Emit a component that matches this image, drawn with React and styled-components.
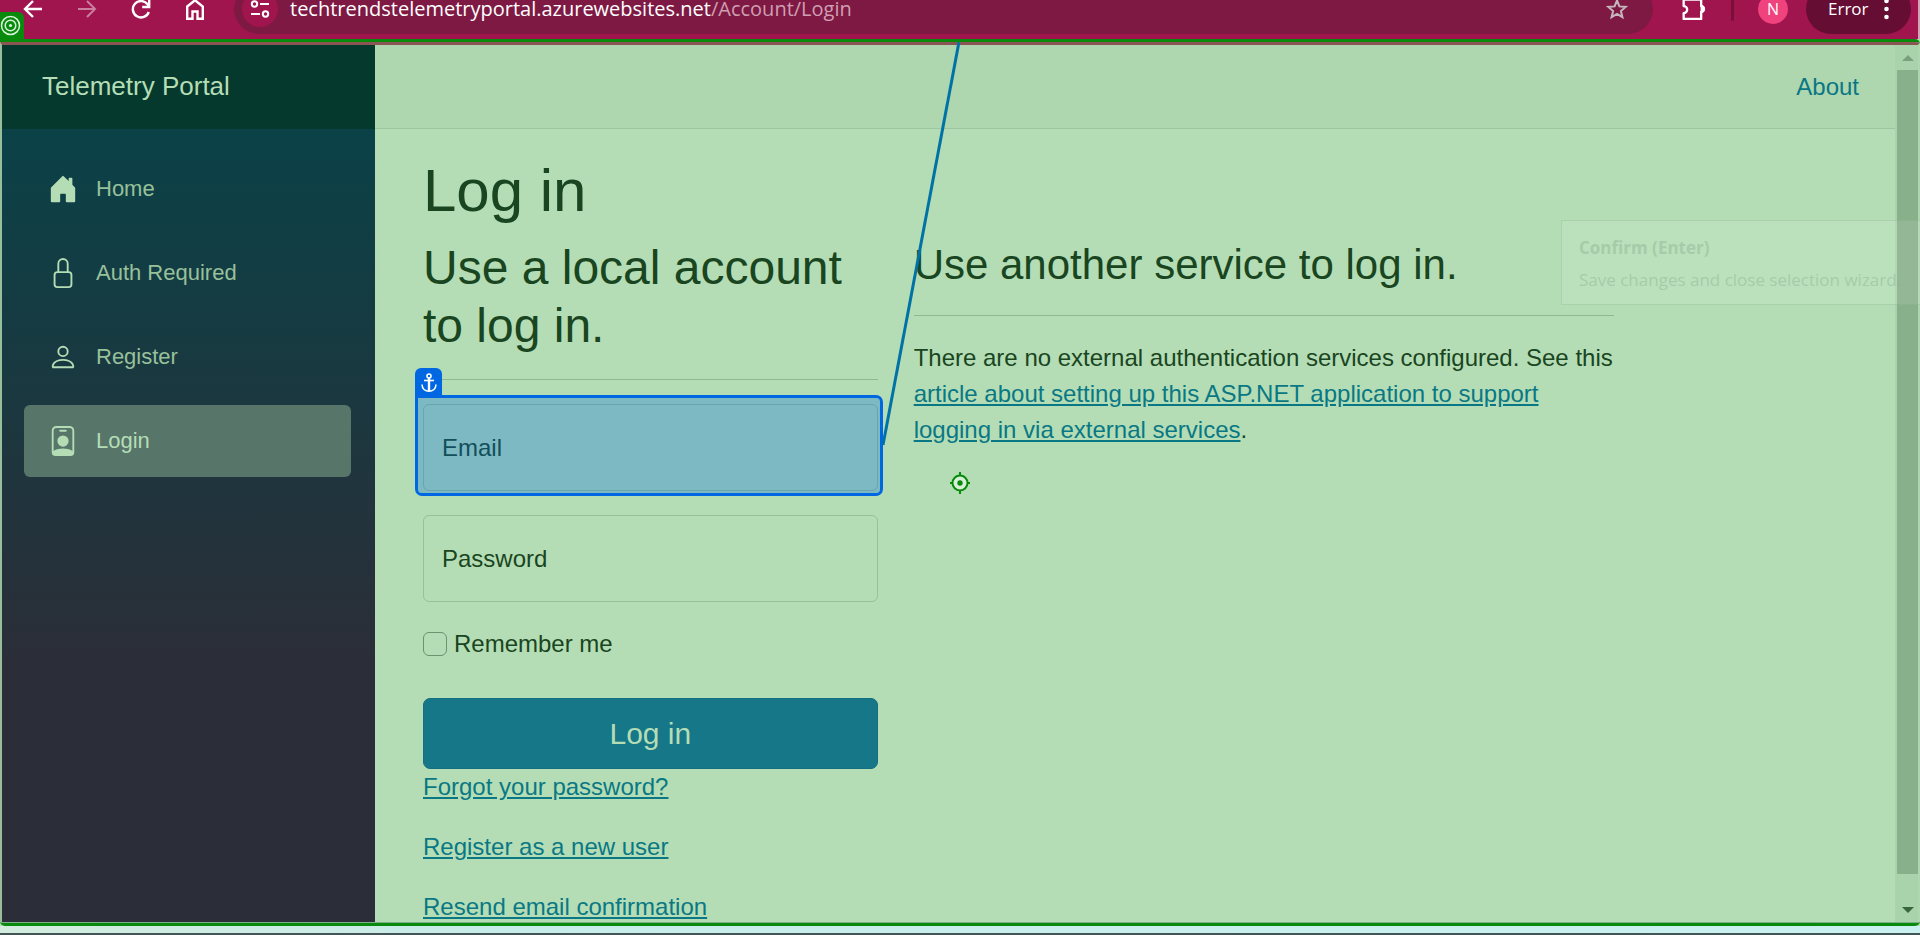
import React from "react";
import styled, { createGlobalStyle } from "styled-components";
import { BsHouseDoorFill, BsLock, BsPerson, BsPersonBadge } from "react-icons/bs";

const color = {
  page: "#b4ddb5",
  header: "#aed7af",
  rule: "#8eb792",
  field: "#97c09b",
  text: "#1a4521",
  link: "#0a7884",
  button: "#157788",
  chrome: "#a1154e",
  omnibox: "#7e1943",
  frame: "#088b0c",
  anchor: "#0067e2",
  connector: "#0072a5",
};

const uiFont = '"Open Sans", "Noto Sans", sans-serif';

const GlobalStyle = createGlobalStyle`
  *, *::before, *::after { box-sizing: border-box; }
  body {
    margin: 0;
    overflow: hidden;
    background: ${color.page};
    color: ${color.text};
    font: 24px/36px "Liberation Sans", Arial, sans-serif;
  }
`;

const Screen = styled.div`
  display: flex;
  flex-direction: column;
  height: 100vh;
`;

/* Browser toolbar */
const Toolbar = styled.div`
  position: relative;
  display: flex;
  align-items: flex-end;
  flex: none;
  height: 39px;
  padding-bottom: 5px;
  overflow: hidden;
  background: ${color.chrome};
  border-right: 2px solid #d3a3b8;
  color: #fff;
  font-family: ${uiFont};
`;
const ToolbarRow = styled.div`
  display: flex;
  align-items: center;
  flex: 1;
  height: 50px;
  padding: 0 7px 0 6px;
`;
const ToolButton = styled.button`
  display: grid;
  place-items: center;
  width: ${(p) => p.$width || 54}px;
  height: 36px;
  padding: 0;
  border: 0;
  background: none;
  color: inherit;
  opacity: ${(p) => (p.$dim ? 0.45 : 1)};
`;
const Omnibox = styled.div`
  display: flex;
  align-items: center;
  gap: 12px;
  flex: 1;
  height: 50px;
  margin: 0 26px 0 12px;
  padding: 0 24px 0 8px;
  border-radius: 25px;
  background: ${color.omnibox};
`;
const SiteInfo = styled.button`
  display: grid;
  place-items: center;
  width: 36px;
  height: 36px;
  padding: 0;
  border: 0;
  border-radius: 50%;
  background: ${color.chrome};
  color: #fff;
`;
const Address = styled.div`
  flex: 1;
  font-size: 20px;
  line-height: 28px;
  white-space: nowrap;
`;
const AddressPath = styled.span`
  color: #cf9fb2;
`;
const Tools = styled.div`
  display: flex;
  align-items: center;
  gap: 24px;
`;
const Divider = styled.span`
  width: 3px;
  height: 24px;
  border-radius: 2px;
  background: #7a0f3a;
`;
const Avatar = styled.span`
  display: grid;
  place-items: center;
  width: 30px;
  height: 30px;
  border-radius: 50%;
  background: #f0427c;
  font-size: 16px;
  line-height: 24px;
`;
const ErrorButton = styled.button`
  display: flex;
  align-items: center;
  justify-content: space-between;
  width: 105px;
  height: 50px;
  margin-left: -6px;
  padding: 0 22px;
  border: 0;
  border-radius: 25px;
  background: #650d33;
  color: #fff;
  font: 17px/24px ${uiFont};
`;
const TargetBadge = styled.div`
  position: absolute;
  left: 0;
  bottom: 0;
  width: 24px;
  height: 27px;
  border-radius: 0 6px 0 0;
  background: ${color.frame};
`;

/* Selected page area */
const Stage = styled.div`
  position: relative;
  display: flex;
  flex: 1;
  min-height: 0;
  border-top: 3px solid ${color.frame};
  border-bottom: 3px solid ${color.frame};
  border-radius: 0 5px 5px 5px;
  overflow: hidden;
`;
const Viewport = styled.div`
  display: flex;
  flex: 1;
  min-width: 0;
  border-top: 3px solid #8a5553;
  border-bottom: 1px solid #7fae8a;
  border-left: 2px solid #98bf9c;
  border-right: 2px solid #aed6b0;
`;
const Sidebar = styled.aside`
  flex: none;
  width: 373px;
  background: linear-gradient(180deg, #05454a 0%, #2b2e38 70%);
`;
const Brand = styled.div`
  display: flex;
  align-items: center;
  height: 84px;
  padding: 0 40px 2px;
  background: #05392d;
  color: ${color.page};
`;
const BrandLink = styled.a`
  color: inherit;
  font-size: 26px;
  text-decoration: none;
`;
const Nav = styled.nav`
  display: flex;
  flex-direction: column;
  gap: 12px;
  padding: 24px 24px 0 22px;
`;
const NavLink = styled.a`
  display: flex;
  align-items: center;
  gap: 18px;
  height: 72px;
  padding: 0 24px;
  border-radius: 6px;
  background: ${(p) => (p.$active ? "#577569" : "transparent")};
  color: ${(p) => (p.$active ? color.page : "#98c09b")};
  font-size: 22px;
  text-decoration: none;
  svg {
    width: 30px;
    height: 30px;
    color: ${color.page};
  }
`;

const Main = styled.main`
  display: flex;
  flex-direction: column;
  flex: 1;
  min-width: 0;
`;
const TopRow = styled.header`
  display: flex;
  align-items: center;
  justify-content: flex-end;
  flex: none;
  height: 84px;
  padding: 0 36px 0 48px;
  border-bottom: 1px solid #9cc5a0;
  background: ${color.header};
`;
const Link = styled.a`
  color: ${color.link};
  text-decoration: ${(p) => (p.$plain ? "none" : "underline")};
`;
const Article = styled.article`
  flex: 1;
  min-height: 0;
  padding: 26px 18px 0 30px;
  overflow: hidden;
`;
const Title = styled.h1`
  margin: 0 18px 12px;
  font-size: 60px;
  font-weight: 400;
  line-height: 72px;
`;
const Columns = styled.div`
  display: grid;
  grid-template-columns: 4fr 6fr 2fr;
`;
const Column = styled.section`
  padding: 0 18px;
`;
const LocalHeading = styled.h2`
  margin: 0;
  font-size: 48px;
  font-weight: 400;
  line-height: 58px;
`;
const ServiceHeading = styled.h3`
  margin: 0;
  font-size: 42px;
  font-weight: 400;
  line-height: 52px;
`;
const Rule = styled.hr`
  height: 1px;
  margin: 24px 0;
  border: 0;
  background: ${color.rule};
`;
const Paragraph = styled.p`
  margin: 0 0 24px;
`;

const Field = styled.div`
  position: relative;
  display: grid;
  margin-bottom: 24px;
  & > input, & > label { grid-area: 1 / 1; }
`;
const Input = styled.input`
  width: 100%;
  height: 87px;
  padding: 24px 18px;
  border: 1px solid ${color.field};
  border-radius: 6px;
  background: transparent;
  color: inherit;
  font: inherit;
`;
const FieldLabel = styled.label`
  align-self: center;
  justify-self: start;
  padding-left: 19px;
`;
const Highlight = styled.div`
  position: absolute;
  inset: -9px -5px -5px -8px;
  border: 3px solid ${color.anchor};
  border-radius: 0 7px 7px 7px;
  background: rgba(0, 102, 224, 0.3);
  background-clip: padding-box;
`;
const AnchorTab = styled.div`
  position: absolute;
  left: -3px;
  bottom: 100%;
  display: grid;
  place-items: center;
  width: 27px;
  height: 30px;
  border-radius: 6px 6px 0 0;
  background: ${color.anchor};
`;
const CheckLabel = styled.label`
  display: flex;
  align-items: center;
  gap: 7px;
  margin-bottom: 36px;
`;
const Checkbox = styled.input`
  appearance: none;
  width: 24px;
  height: 24px;
  margin: 0;
  border: 1px solid #6b936f;
  border-radius: 6px;
`;
const Submit = styled.button`
  width: 100%;
  height: 71px;
  border: 1px solid #146f80;
  border-radius: 7px;
  background: ${color.button};
  color: ${color.page};
  font: 30px/45px "Liberation Sans", Arial, sans-serif;
`;

const ScrollTrack = styled.div`
  display: flex;
  flex-direction: column;
  flex: none;
  width: 23px;
  padding-left: 2px;
  background: #a9d3ab;
`;
const ScrollArrow = styled.div`
  display: grid;
  place-items: center;
  height: 25px;
  color: ${(p) => p.$color};
`;
const ScrollThumb = styled.div`
  flex: 1;
  margin-bottom: 23px;
  background: #88b08a;
`;

/* Layers over the page */
const Connector = styled.svg`
  position: absolute;
  top: 0;
  right: 50%;
`;
const Crosshair = styled.svg`
  position: absolute;
  top: 50%;
  left: 50%;
  transform: translate(-50%, -50%);
`;
const Hint = styled.div`
  position: absolute;
  top: 178px;
  right: 0;
  width: 359px;
  height: 85px;
  padding: 15px 17px;
  border: 1px solid rgba(120, 160, 125, 0.25);
  border-right: 0;
  background: rgba(255, 255, 255, 0.1);
  color: rgba(130, 170, 138, 0.4);
  font: 17px/24px ${uiFont};
  white-space: nowrap;
`;
const HintTitle = styled.strong`
  display: block;
  margin-bottom: 8px;
`;

const Desktop = styled.div`
  flex: none;
  height: 9px;
  border-bottom: 2px solid #455456;
  background: linear-gradient(90deg, #d3ecdf 0, #c8ece9 25%, #caf0f2 100%);
`;

const Icon = ({ children, size = 24, stroke = 2 }) => (
  <svg width={size} height={size} viewBox="0 0 24 24" fill="none" stroke="currentColor" strokeWidth={stroke} aria-hidden="true">
    {children}
  </svg>
);

const navItems = [
  { label: "Home", icon: BsHouseDoorFill },
  { label: "Auth Required", icon: BsLock },
  { label: "Register", icon: BsPerson },
  { label: "Login", icon: BsPersonBadge, active: true },
];

function BrowserToolbar() {
  return (
    <Toolbar>
      <ToolbarRow>
        <ToolButton aria-label="Back">
          <Icon stroke={2.4}><path d="M21 12H4M12 4l-8 8 8 8" /></Icon>
        </ToolButton>
        <ToolButton aria-label="Forward" $dim>
          <Icon><path d="M3 12h17M12 4l8 8-8 8" /></Icon>
        </ToolButton>
        <ToolButton aria-label="Reload">
          <Icon stroke={2.4}><path d="M19.8 15A8.200 8.200 0 1 1 18.600 7.300L20 9.500M20.200 3v7h-7" /></Icon>
        </ToolButton>
        <ToolButton aria-label="Home page">
          <Icon stroke={2.4}><path d="M4.200 9.500 12 3.200l7.800 6.300v12.300h-5.300v-7.300h-5v7.300H4.200z" /></Icon>
        </ToolButton>
        <Omnibox>
          <SiteInfo aria-label="Site information">
            <Icon>
              <circle cx="6.500" cy="7" r="2.700" />
              <path d="M12 7h9M3 17h9" />
              <circle cx="17.500" cy="17" r="2.700" />
            </Icon>
          </SiteInfo>
          <Address>
            techtrendstelemetryportal.azurewebsites.net<AddressPath>/Account/Login</AddressPath>
          </Address>
          <ToolButton aria-label="Bookmark" $width={24}>
            <svg width="24" height="24" viewBox="0 0 24 24" fill="none" stroke="#c4b8bd" strokeWidth="2" aria-hidden="true">
              <path d="m12 3.500 2.400 5.900 6.300.5-4.800 4.100 1.500 6.200-5.400-3.300-5.400 3.300 1.500-6.200-4.800-4.100 6.300-.5z" />
            </svg>
          </ToolButton>
        </Omnibox>
        <Tools>
          <ToolButton aria-label="Extensions" $width={28}>
            <Icon size={28} stroke={2}>
              <path d="M4 4h15v5.500a2.600 2.600 0 0 1 0 5V20.500H4v-5a3 3 0 0 0 0-6z" strokeLinejoin="round" />
              <path d="M19.500 9.500a2.600 2.600 0 0 1 0 5z" fill="currentColor" />
            </Icon>
          </ToolButton>
          <Divider />
          <Avatar>N</Avatar>
          <ErrorButton>
            Error
            <svg width="5" height="22" viewBox="0 0 5 22" fill="currentColor" aria-hidden="true">
              <circle cx="2.500" cy="3" r="2.300" />
              <circle cx="2.500" cy="11" r="2.300" />
              <circle cx="2.500" cy="19" r="2.300" />
            </svg>
          </ErrorButton>
        </Tools>
      </ToolbarRow>
      <TargetBadge>
        <svg width="22" height="27" viewBox="0 0 22 27" fill="none" stroke="#d9f2da" strokeWidth="1.500" aria-hidden="true">
          <circle cx="10.500" cy="13.500" r="9" />
          <circle cx="10.500" cy="13.500" r="5.300" />
          <circle cx="10.500" cy="13.500" r="1.600" fill="#d9f2da" stroke="none" />
        </svg>
      </TargetBadge>
    </Toolbar>
  );
}

function LoginForm() {
  return (
    <form onSubmit={(e) => e.preventDefault()}>
      <Field>
        <Input id="email" type="email" />
        <FieldLabel htmlFor="email">Email</FieldLabel>
        <Highlight>
          <AnchorTab>
            <svg width="18" height="20" viewBox="0 0 18 20" fill="none" stroke="#fff" strokeWidth="1.600" aria-hidden="true">
              <circle cx="9" cy="3" r="2" />
              <path d="M4 7.500h10" />
              <path d="M9 5v13" strokeWidth="2.400" />
              <path d="M2 11.500c.2 4 3 6.700 7 6.700s6.800-2.700 7-6.700" />
            </svg>
          </AnchorTab>
        </Highlight>
      </Field>
      <Field>
        <Input id="password" type="password" />
        <FieldLabel htmlFor="password">Password</FieldLabel>
      </Field>
      <CheckLabel>
        <Checkbox type="checkbox" />
        Remember me
      </CheckLabel>
      <Submit type="submit">Log in</Submit>
      <Paragraph><Link href="#forgot">Forgot your password?</Link></Paragraph>
      <Paragraph><Link href="#register">Register as a new user</Link></Paragraph>
      <Paragraph><Link href="#resend">Resend email confirmation</Link></Paragraph>
    </form>
  );
}

export default function App() {
  return (
    <Screen>
      <GlobalStyle />
      <BrowserToolbar />
      <Stage>
        <Viewport>
          <Sidebar>
            <Brand><BrandLink href="#home">Telemetry Portal</BrandLink></Brand>
            <Nav>
              {navItems.map(({ label, icon: Glyph, active }) => (
                <NavLink key={label} href="#nav" $active={active}>
                  <Glyph aria-hidden="true" />
                  {label}
                </NavLink>
              ))}
            </Nav>
          </Sidebar>
          <Main>
            <TopRow><Link href="#about" $plain>About</Link></TopRow>
            <Article>
              <Title>Log in</Title>
              <Columns>
                <Column>
                  <LocalHeading>Use a local account to log in.</LocalHeading>
                  <Rule />
                  <LoginForm />
                </Column>
                <Column>
                  <ServiceHeading>Use another service to log in.</ServiceHeading>
                  <Rule />
                  <Paragraph>
                    There are no external authentication services configured. See this{" "}
                    <Link href="#article">
                      article about setting up this ASP.NET application to support logging in via external services
                    </Link>
                    .
                  </Paragraph>
                </Column>
              </Columns>
            </Article>
          </Main>
          <ScrollTrack>
            <ScrollArrow $color="#7aa07d">
              <svg width="12" height="6" viewBox="0 0 12 6" aria-hidden="true"><path d="M0 6 6 0l6 6z" fill="currentColor" /></svg>
            </ScrollArrow>
            <ScrollThumb />
            <ScrollArrow $color="#39663d">
              <svg width="12" height="6" viewBox="0 0 12 6" aria-hidden="true"><path d="M0 0h12L6 6z" fill="currentColor" /></svg>
            </ScrollArrow>
          </ScrollTrack>
        </Viewport>
        <Hint>
          <HintTitle>Confirm (Enter)</HintTitle>
          Save changes and close selection wizard.
        </Hint>
        <Connector width="80" height="406" viewBox="0 0 80 406" aria-hidden="true">
          <path d="M79 0 3 403" stroke={color.connector} strokeWidth="3" />
        </Connector>
        <Crosshair width="20" height="22" viewBox="0 0 20 22" fill="none" stroke={color.frame} strokeWidth="2" aria-hidden="true">
          <circle cx="10" cy="11" r="7.500" fill="#d9efda" />
          <path d="M10 0v4M10 18v4M0 11h3M17 11h3" />
          <circle cx="10" cy="11" r="2.700" fill={color.frame} stroke="none" />
        </Crosshair>
      </Stage>
      <Desktop />
    </Screen>
  );
}
